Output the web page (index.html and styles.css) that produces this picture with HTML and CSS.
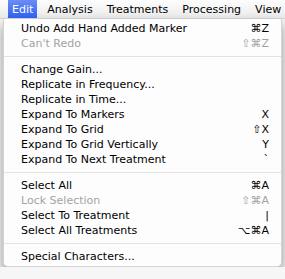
FILE: index.html
```html
<!DOCTYPE html>
<html>

<head>
    <link rel="stylesheet" href="styles.css">
</head>

<body>
    <div class="MenuBar">
        <span class="Title Active">Edit</span>
        <span class="Title">Analysis</span>
        <span class="Title">Treatments</span>
        <span class="Title">Processing</span>
        <span class="Title">View</span>
    </div>
    <div class="Menu">
        <div class="Item"><span>Undo Add Hand Added Marker</span><span class="Key">⌘Z</span></div>
        <div class="Item Off"><span>Can't Redo</span><span class="Key">⇧⌘Z</span></div>
        <div class="Sep"></div>
        <div class="Item"><span>Change Gain...</span></div>
        <div class="Item"><span>Replicate in Frequency...</span></div>
        <div class="Item"><span>Replicate in Time...</span></div>
        <div class="Item"><span>Expand To Markers</span><span class="Key">X</span></div>
        <div class="Item"><span>Expand To Grid</span><span class="Key">⇧X</span></div>
        <div class="Item"><span>Expand To Grid Vertically</span><span class="Key">Y</span></div>
        <div class="Item"><span>Expand To Next Treatment</span><span class="Key">`</span></div>
        <div class="Sep"></div>
        <div class="Item"><span>Select All</span><span class="Key">⌘A</span></div>
        <div class="Item Off"><span>Lock Selection</span><span class="Key">⇧⌘A</span></div>
        <div class="Item"><span>Select To Treatment</span><span class="Key">|</span></div>
        <div class="Item"><span>Select All Treatments</span><span class="Key">⌥⌘A</span></div>
        <div class="Sep"></div>
        <div class="Item"><span>Special Characters...</span></div>
    </div>
</body>

</html>
```

FILE: styles.css
```css
body {
    margin: 0;
    background-color: #f6f6f6;
    font-family: "DejaVu Sans", sans-serif;
    font-size: 11px;
    color: #000;
    overflow: hidden;
}

.MenuBar {
    display: flex;
    gap: 6px;
    height: 19px;
    padding-left: 8px;
    background: linear-gradient(#fdfdfd, #ebebeb);
    border-bottom: 1px solid #d8d8d8;
    box-sizing: border-box;
}

.MenuBar .Title {
    padding: 0 4px;
    line-height: 19px;
}

.MenuBar .Active {
    color: white;
    background: linear-gradient(#6b8df5, #2f5fee);
}

.Menu {
    width: 279px;
    margin-left: 3px;
    padding: 2px 0 2px;
    background-color: #fdfdfd;
    border: 1px solid #d4d4d4;
    border-top: none;
    border-radius: 0 0 5px 5px;
    box-sizing: border-box;
    box-shadow: 0 6px 12px rgba(0, 0, 0, 0.4);
}

.Menu .Item {
    display: flex;
    justify-content: space-between;
    height: 15px;
    line-height: 15px;
    padding: 0 12px 0 17px;
    white-space: nowrap;
}

.Menu .Off {
    color: #a3a3a3;
}

.Menu .Sep {
    height: 1px;
    margin: 5px 0;
    background-color: #e2e2e2;
}
```
